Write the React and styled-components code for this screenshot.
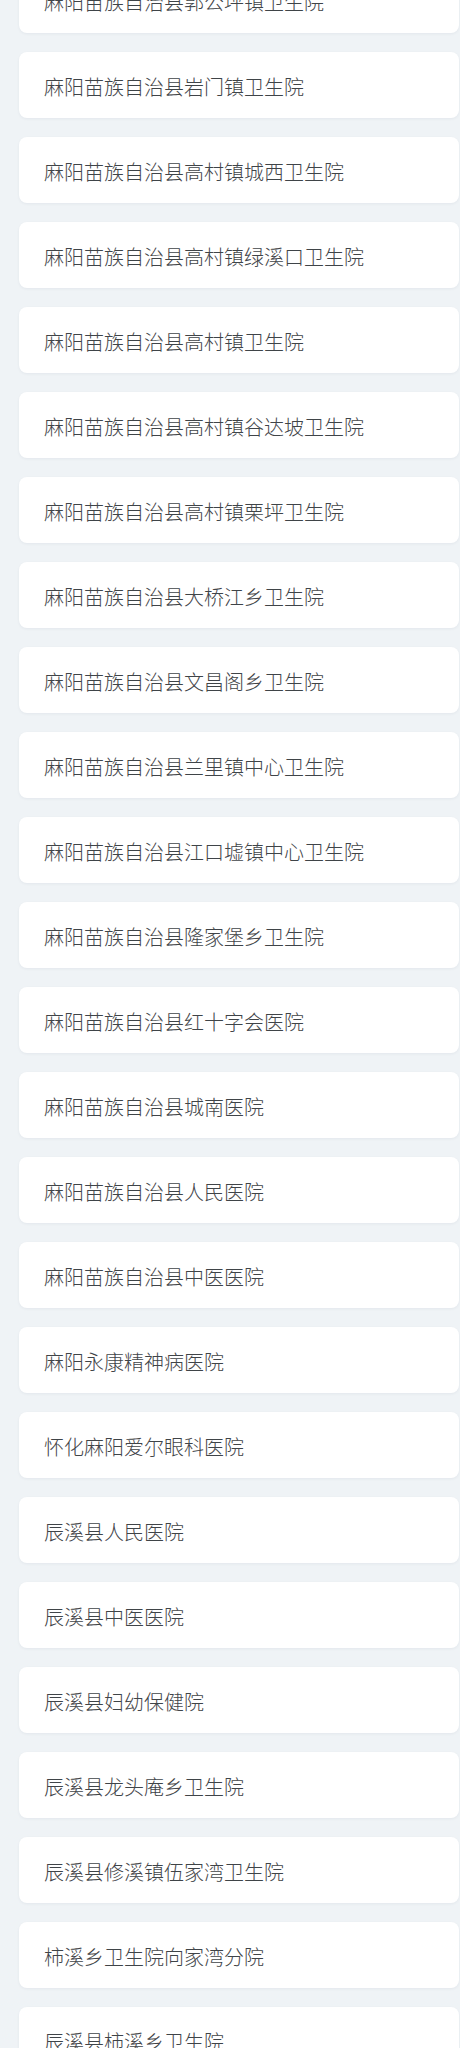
import React from "react";
import styled, { createGlobalStyle } from "styled-components";

const hospitals = [
  "麻阳苗族自治县郭公坪镇卫生院",
  "麻阳苗族自治县岩门镇卫生院",
  "麻阳苗族自治县高村镇城西卫生院",
  "麻阳苗族自治县高村镇绿溪口卫生院",
  "麻阳苗族自治县高村镇卫生院",
  "麻阳苗族自治县高村镇谷达坡卫生院",
  "麻阳苗族自治县高村镇栗坪卫生院",
  "麻阳苗族自治县大桥江乡卫生院",
  "麻阳苗族自治县文昌阁乡卫生院",
  "麻阳苗族自治县兰里镇中心卫生院",
  "麻阳苗族自治县江口墟镇中心卫生院",
  "麻阳苗族自治县隆家堡乡卫生院",
  "麻阳苗族自治县红十字会医院",
  "麻阳苗族自治县城南医院",
  "麻阳苗族自治县人民医院",
  "麻阳苗族自治县中医医院",
  "麻阳永康精神病医院",
  "怀化麻阳爱尔眼科医院",
  "辰溪县人民医院",
  "辰溪县中医医院",
  "辰溪县妇幼保健院",
  "辰溪县龙头庵乡卫生院",
  "辰溪县修溪镇伍家湾卫生院",
  "柿溪乡卫生院向家湾分院",
  "辰溪县柿溪乡卫生院",
];

const GlobalStyle = createGlobalStyle`
  html, body {
    margin: 0;
    padding: 0;
    background: #eff3f6;
    overflow: hidden;
  }
  body {
    font-family: "Noto Sans CJK SC", "Noto Sans", sans-serif;
  }
`;

export default function App() {
  return (
    <>
      <GlobalStyle />
      <List.Wrapper>
        {hospitals.map((name) => (
          <List.Item key={name}>{name}</List.Item>
        ))}
      </List.Wrapper>
    </>
  );
}

const List = {
  Wrapper: styled.div`
    display: flex;
    flex-direction: column;
    gap: 19px;
    margin-top: -33px;
    padding: 0 1px 0 19px;
    height: 2081px;
    overflow: hidden;
  `,
  Item: styled.div`
    flex: 0 0 66px;
    display: flex;
    align-items: center;
    padding: 2px 25px 0;
    box-sizing: border-box;
    background: #ffffff;
    border-radius: 8px;
    box-shadow: 0 1px 3px rgba(30, 50, 80, 0.06);
    font-size: 20px;
    font-weight: 300;
    color: #3f4448;
    cursor: pointer;
  `,
};
